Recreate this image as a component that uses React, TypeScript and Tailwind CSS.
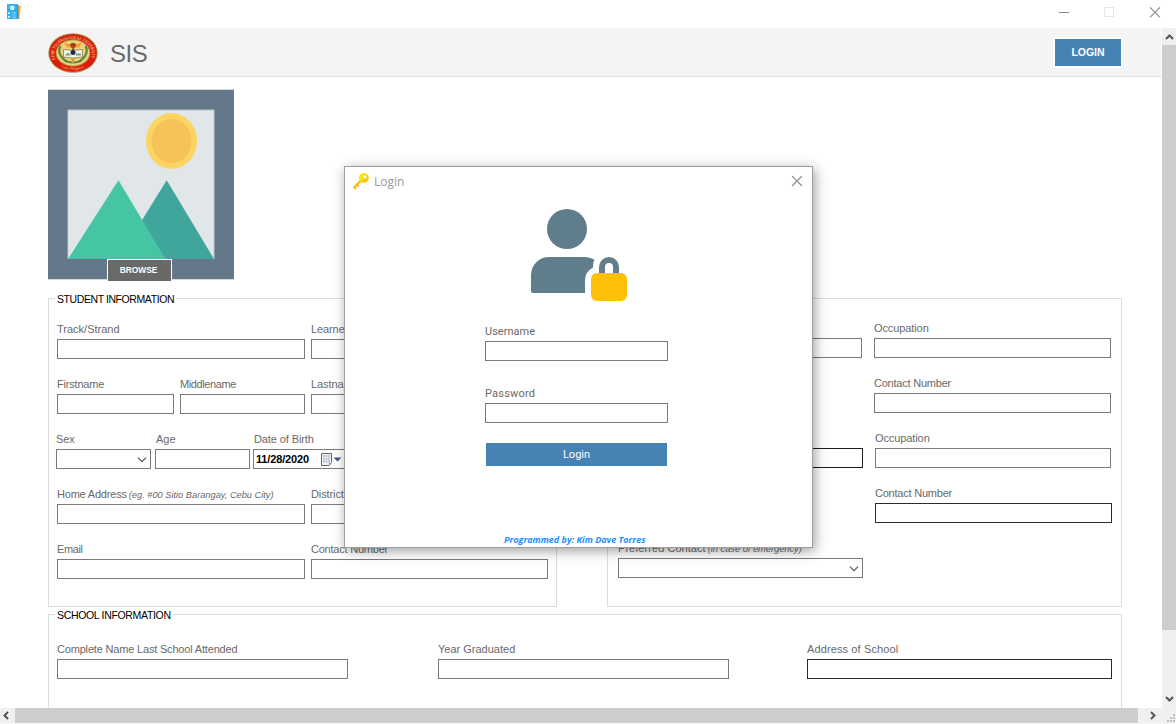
import React from "react";

type FieldProps = {
  label?: string;
  hint?: string;
  className: string;
  labelClass?: string;
  boxClass?: string;
  children?: React.ReactNode;
};

function Field({
  label,
  hint,
  className,
  labelClass = "tracking-[-0.1px]",
  boxClass = "border-[#7a7a7a]",
  children,
}: FieldProps) {
  return (
    <div className={"shrink-0 " + className}>
      <div className={"flex h-[18px] items-baseline whitespace-nowrap text-[11px] leading-[16px] text-[#696969] " + labelClass}>
        {label}
        {hint && <span className="ml-0.5 text-[9.25px] italic tracking-normal">{hint}</span>}
      </div>
      <div className={"flex h-5 items-center border bg-white " + boxClass}>{children}</div>
    </div>
  );
}

function Chevron() {
  return (
    <svg width="10" height="6" viewBox="0 0 10 6" className="ml-auto mr-[3px] mt-0.5" fill="none" stroke="#555" strokeWidth="1.2">
      <path d="M1 .7 5 4.7 9 .7" />
    </svg>
  );
}

function Seal() {
  return (
    <svg width="50" height="40" viewBox="0 0 50 40">
      <defs>
        <path id="arc-top" d="M7.800 27 A19 14.600 0 1 1 42.200 27" />
        <path id="arc-low" d="M12 33.300 A21 16.500 0 0 0 38 33.300" />
      </defs>
      <ellipse cx="25" cy="20" rx="24.700" ry="19.700" fill="#a89445" />
      <ellipse cx="25" cy="20" rx="23.800" ry="18.800" fill="#dc1c10" />
      <ellipse cx="25" cy="20" rx="17.300" ry="13.400" fill="#b59b3a" />
      <ellipse cx="25" cy="20" rx="16.300" ry="12.500" fill="#ecd183" />
      <path d="M12.500 13Q8 21 19 29M37.500 13Q42 21 31 29" fill="none" stroke="#5d8436" strokeWidth="2" />
      <path d="M16 9.500 25 12.500 34 9.500 31 14.500H19Z" fill="#f0a02c" />
      <path d="M21.500 11.500Q25 8 28.500 11.500L26.500 15H23.500Z" fill="#a4441c" />
      <path d="M24 15h2.400l-.7 14h-1Z" fill="#9a6428" />
      <path d="M15.500 16.500 25 17.500l9.500-1V24L25 25l-9.500-1Z" fill="#f7f5e6" stroke="#55603a" strokeWidth=".6" />
      <path d="M17 22.500l3-3 3 3ZM28 20.500h5v2h-5Z" fill="#7f9d78" />
      <circle cx="25" cy="19.500" r="2.500" fill="#1c2a4c" />
      <path d="M17 27.500q8 4.500 16 0" fill="none" stroke="#4d7d30" strokeWidth="1.600" />
      <path d="M23 25h4l-1 5h-2Z" fill="#d59a3b" />
      <text fontFamily="Liberation Serif, serif" fontSize="4.500" fontWeight="700" fill="#f3c48c">
        <textPath href="#arc-top" startOffset="1" textLength="62" lengthAdjust="spacingAndGlyphs">
          CEBU TECHNOLOGICAL UNIVERSITY
        </textPath>
      </text>
      <text fontFamily="Liberation Serif, serif" fontSize="3.500" fill="#f3c48c">
        <textPath href="#arc-low" startOffset="2" textLength="23">
          Cebu, Philippines
        </textPath>
      </text>
    </svg>
  );
}

function TitleBar() {
  return (
    <div className="flex h-7 shrink-0 bg-white">
      <svg width="16" height="16" viewBox="0 0 16 16" className="ml-1.5 mt-1">
        <path d="M10 1 15 1.800 13.500 15H10Z" fill="#ffb83d" />
        <rect x="1" y="0" width="11" height="15" rx=".6" fill="#29b0f5" />
        <path d="M12 1v14" stroke="#16719c" strokeWidth=".7" />
        <circle cx="6.300" cy="3.700" r="2.300" fill="#fff" />
        <path d="M5.200 3.500l1 1 1.600-1.700" fill="none" stroke="#29b0f5" strokeWidth=".6" />
        <path d="M2 8.500h2v1.500H2ZM2 12h2v1.500H2Z" fill="#fff" />
        <path d="M6 8.300h4M6 9.900h4M6 12h4M6 13.500h4" stroke="#8bd6fb" strokeWidth=".8" />
        <path d="M2 1h1M2 3h1" stroke="#8bd6fb" strokeWidth=".8" />
      </svg>
      <svg width="103" height="12" viewBox="0 0 103 12" className="ml-auto mr-[15px] mt-[7px]" fill="none">
        <path d="M1 5.500h10" stroke="#8c8c8c" />
        <rect x="46.500" y=".5" width="9" height="9" stroke="#e6e6e6" />
        <path d="M92 .3 102 10.300M102 .3 92 10.300" stroke="#8c8c8c" strokeWidth="1.100" />
      </svg>
    </div>
  );
}

function Header() {
  return (
    <div className="flex h-[49px] shrink-0 items-center border-b border-[#e0e0e0] bg-[#f4f4f4] pl-12">
      <div className="mt-0.5 h-10">
        <Seal />
      </div>
      <span className="ml-3 mt-1 text-[24px] leading-7 tracking-[-0.5px] text-[#696969]">SIS</span>
      <button className="mb-px ml-auto mr-[38px] mt-px h-[31px] w-[70px] border-2 border-white bg-[#4682b4] text-[10.500px] font-bold leading-none text-white">
        LOGIN
      </button>
    </div>
  );
}

function Photo() {
  return (
    <div className="relative ml-12 mt-3 h-[191px] w-[186px]">
      <svg width="186" height="191" viewBox="0 0 186 191">
        <rect width="186" height="191" fill="#d4dade" />
        <rect y="1" width="186" height="189" fill="#64788a" />
        <rect x="19.500" y="20.500" width="147" height="149.500" fill="#b9c4cc" />
        <rect x="20.300" y="21.500" width="145.400" height="148.500" fill="#e1e6e9" />
        <ellipse cx="123.500" cy="52" rx="25.600" ry="28" fill="#fcd462" />
        <ellipse cx="123.500" cy="52" rx="20" ry="22.300" fill="#f6c358" />
        <path d="M118.700 91.300 166 170H70Z" fill="#40a69c" />
        <path d="M70.500 91.300 117.500 170H20Z" fill="#45c5a3" />
      </svg>
      <button className="absolute left-[59px] top-[170px] h-[23px] w-[65px] border border-white bg-[#696969] pr-0.5 text-[8.400px] font-bold leading-none text-white">
        BROWSE
      </button>
    </div>
  );
}

function StudentInfo() {
  return (
    <fieldset className="h-[315px] w-[509px] border border-[#dcdcdc] pl-2">
      <legend className="-ml-0.5 h-[13px] whitespace-nowrap px-0.5 text-[10.500px] leading-[15px] tracking-[-0.420px] text-black">
        STUDENT INFORMATION
      </legend>
      <div className="mt-4 flex flex-col gap-[17px]">
        <div className="flex gap-1.5">
          <Field label="Track/Strand" className="w-[248px]" labelClass="tracking-normal" />
          <Field label="Learners Reference Number" className="w-[237px]" />
        </div>
        <div className="flex gap-1.5">
          <Field label="Firstname" className="w-[117px]" labelClass="tracking-[-0.200px]" />
          <Field label="Middlename" className="w-[125px]" labelClass="tracking-[-0.400px]" />
          <Field label="Lastname" className="w-[237px]" />
        </div>
        <div className="-ml-px flex">
          <Field label="Sex" className="w-[95px]">
            <Chevron />
          </Field>
          <Field label="Age" className="ml-1 w-[95px]" labelClass="pl-px" />
          <Field label="Date of Birth" className="ml-[3px] w-[94px]" labelClass="pl-px tracking-[-0.100px]">
            <span className="ml-0.5 w-[65px] shrink-0 text-[11px] font-bold tracking-[-0.150px] text-black">11/28/2020</span>
            <svg width="21" height="14" viewBox="0 0 21 14" className="mt-px shrink-0">
              <path d="M.5.500h10v9l-2.500 3H.5Z" fill="#f6f4f4" stroke="#6e6265" />
              <path d="M2 2h7v7.500H2Z" fill="#b4bed2" />
              <path d="M4.300 2v7.500M6.700 2v7.500M2 4.500h7M2 7h7" stroke="#fff" strokeWidth=".6" />
              <path d="M8 12.500V10h2.500Z" fill="#8f8587" />
              <path d="M12.500 4.500h8l-4 4Z" fill="#46597c" />
            </svg>
          </Field>
        </div>
        <div className="flex gap-1.5">
          <Field label="Home Address" hint="(eg. #00 Sitio Barangay, Cebu City)" className="w-[248px]" labelClass="tracking-[-0.200px]" />
          <Field label="District" className="w-[237px]" />
        </div>
        <div className="flex gap-1.5">
          <Field label="Email" className="w-[248px]" labelClass="tracking-[-0.400px]" />
          <Field label="Contact Number" className="w-[237px]" labelClass="tracking-[-0.220px]" />
        </div>
      </div>
    </fieldset>
  );
}

function GuardianInfo() {
  return (
    <div className="ml-[50px] mt-1.5 flex h-[309px] w-[515px] flex-col gap-[17px] border border-[#dcdcdc] pl-2.5 pt-[21px]">
      <div className="flex gap-3">
        <Field className="w-[244px]" />
        <Field label="Occupation" className="w-[237px]" />
      </div>
      <div className="flex pl-64">
        <Field label="Contact Number" className="w-[237px]" labelClass="tracking-[-0.220px]" />
      </div>
      <div className="flex gap-3">
        <Field className="w-[245px]" boxClass="border-[#1c1c1c]" />
        <Field label="Occupation" className="w-[236px]" />
      </div>
      <div className="flex pl-[257px]">
        <Field label="Contact Number" className="w-[237px]" labelClass="tracking-[-0.220px]" boxClass="border-[#2c2c30]" />
      </div>
      <Field label="Preferred Contact" hint="(in case of emergency)" className="w-[245px]" labelClass="tracking-[0.050px]">
        <Chevron />
      </Field>
    </div>
  );
}

function SchoolInfo() {
  return (
    <fieldset className="ml-12 mt-px h-[140px] w-[1074px] border border-[#dcdcdc] pl-2">
      <legend className="-ml-0.5 h-[13px] whitespace-nowrap px-0.5 text-[10.500px] leading-[15px] tracking-[-0.330px] text-black">
        SCHOOL INFORMATION
      </legend>
      <div className="mt-5 flex">
        <Field label="Complete Name Last School Attended" className="w-[291px]" labelClass="tracking-[-0.180px]" />
        <Field label="Year Graduated" className="ml-[90px] w-[291px]" labelClass="tracking-normal" />
        <Field label="Address of School" className="ml-[78px] w-[305px]" labelClass="tracking-[0.120px]" boxClass="border-[#2c2c30]" />
      </div>
    </fieldset>
  );
}

function LoginDialog() {
  return (
    <div className="absolute left-[344px] top-[166px] flex h-[382px] w-[469px] flex-col border border-[#9d9d9d] bg-white shadow-[2px_3px_12px_rgba(0,0,0,0.38)]">
      <div className="flex h-[30px] shrink-0 items-center">
        <svg width="17" height="17" viewBox="0 0 17 17" className="-mt-px ml-[7px]">
          <path d="M10 6.500 1.500 15M2 13.500l2 2.500M4.500 11.500l2 2" fill="none" stroke="#fdb90c" strokeWidth="2.200" />
          <circle cx="12" cy="5" r="4.800" fill="#fdc60b" />
          <path d="M7.200 5.500a4.800 4.800 0 0 1 8-4L8.800 8.500Z" fill="#fbe800" />
          <circle cx="13.200" cy="4" r="1.400" fill="#fff" />
        </svg>
        <span className="ml-[5px] font-['Open_Sans',sans-serif] text-[12px] leading-4 text-[#999]">Login</span>
        <svg width="12" height="12" viewBox="0 0 12 12" className="-mt-0.5 ml-auto mr-[9px]" stroke="#8c8c8c" strokeWidth="1.100">
          <path d="M1 1 11 11M11 1 1 11" />
        </svg>
      </div>
      <svg width="98" height="94" viewBox="0 0 98 94" className="ml-[185px] mt-[11px] shrink-0">
        <circle cx="37" cy="21" r="20" fill="#607d8b" />
        <path d="M1 83V67A18 18 0 0 1 19 49H55Q60 49 64.300 51.500Q63 55 63 59.500Q55 64 55 72V85H3Q1 85 1 83Z" fill="#607d8b" />
        <path d="M72 67V59a7 7 0 0 1 14 0V67" fill="none" stroke="#607d8b" strokeWidth="6" />
        <rect x="61" y="65" width="36" height="28" rx="6" fill="#ffc107" />
      </svg>
      <div className="ml-[140px] mt-[21px] flex w-[183px] flex-col font-[Roboto,sans-serif]">
        <Field label="Username" className="w-[183px]" labelClass="pt-px tracking-[0.020px]" />
        <Field label="Password" className="mt-6 w-[183px]" labelClass="pt-px tracking-[0.200px]" />
        <button className="ml-px mt-5 h-[23px] w-[181px] bg-[#4682b4] text-[11px] leading-none text-white">Login</button>
      </div>
      <div className="ml-[159px] mt-auto whitespace-nowrap font-['Open_Sans',sans-serif] text-[9px] font-bold italic leading-[15px] text-[#1e90ff]">
        Programmed by: Kim Dave Torres
      </div>
    </div>
  );
}

function VerticalScroll() {
  return (
    <div className="flex w-[15px] shrink-0 flex-col border-l border-white bg-[#f0f0f0]">
      <svg width="14" height="17" viewBox="0 0 14 17" className="shrink-0" fill="none" stroke="#555" strokeWidth="2">
        <path d="M4 11 7.500 7.500 11 11" />
      </svg>
      <div className="h-[585px] bg-[#cdcdcd]" />
      <svg width="14" height="14" viewBox="0 0 14 14" className="mt-auto" fill="none" stroke="#555" strokeWidth="2">
        <path d="M4 3 7.500 6.500 11 3" />
      </svg>
    </div>
  );
}

function HorizontalScroll() {
  return (
    <div className="flex h-4 shrink-0 border-b border-[#f7f7f7] bg-[#f0f0f0]">
      <svg width="15" height="15" viewBox="0 0 15 15" fill="none" stroke="#555" strokeWidth="2">
        <path d="M8 4 4.500 7.500 8 11" />
      </svg>
      <div className="w-[1123px] bg-[#cdcdcd]" />
      <svg width="38" height="15" viewBox="0 0 38 15">
        <path d="M13 4 16.500 7.500 13 11" fill="none" stroke="#555" strokeWidth="2" />
        <path d="M29 12h2v2h-2ZM32 12h2v2h-2ZM35 12h2v2h-2ZM32 9h2v2h-2ZM35 9h2v2h-2ZM35 6h2v2h-2Z" fill="#c0c0c0" />
      </svg>
    </div>
  );
}

export default function App() {
  return (
    <div className="relative flex h-[724px] w-[1176px] flex-col overflow-hidden bg-white font-['Liberation_Sans',sans-serif]">
      <TitleBar />
      <div className="flex h-[680px] shrink-0">
        <div className="flex h-[680px] w-[1161px] flex-col overflow-hidden">
          <Header />
          <div className="flex flex-col">
            <Photo />
            <div className="ml-12 mt-3 flex">
              <StudentInfo />
              <GuardianInfo />
            </div>
            <SchoolInfo />
          </div>
        </div>
        <VerticalScroll />
      </div>
      <HorizontalScroll />
      <LoginDialog />
    </div>
  );
}
